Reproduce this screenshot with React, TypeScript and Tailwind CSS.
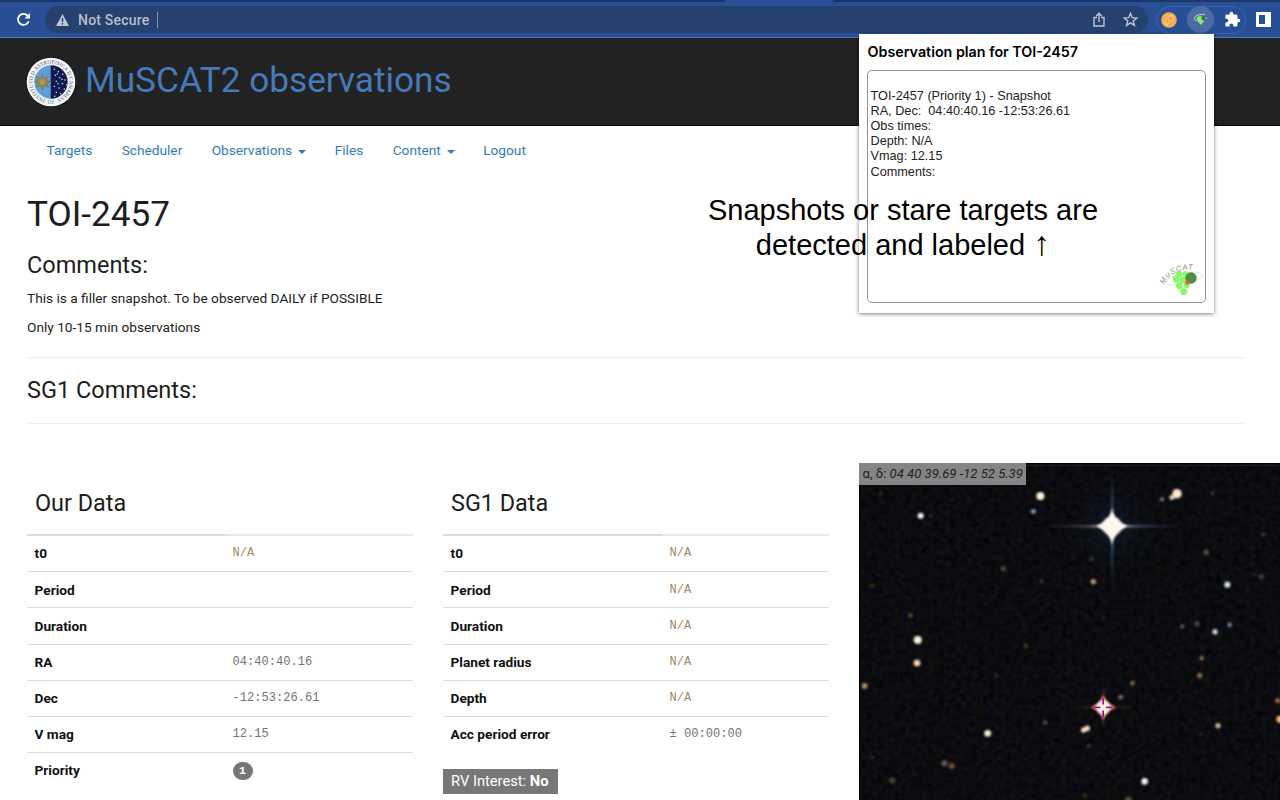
import React from "react";
import { MdExtension } from "react-icons/md";

type Row = { label: string; value?: string; kind?: "na" | "num" | "badge" };

const ourRows: Row[] = [
  { label: "t0", value: "N/A", kind: "na" },
  { label: "Period" },
  { label: "Duration" },
  { label: "RA", value: "04:40:40.16", kind: "num" },
  { label: "Dec", value: "-12:53:26.61", kind: "num" },
  { label: "V mag", value: "12.15", kind: "num" },
  { label: "Priority", value: "1", kind: "badge" },
];

const sgRows: Row[] = [
  { label: "t0", value: "N/A", kind: "na" },
  { label: "Period", value: "N/A", kind: "na" },
  { label: "Duration", value: "N/A", kind: "na" },
  { label: "Planet radius", value: "N/A", kind: "na" },
  { label: "Depth", value: "N/A", kind: "na" },
  { label: "Acc period error", value: "± 00:00:00", kind: "num" },
];

// x, y, radius, colour, opacity
const stars: [number, number, number, string, number][] = [
  [571, 124, 12, "#fff1dc", 1], [550, 170, 7, "#b8cbe0", 0.8], [212, 183, 9, "#f4f4f4", 1],
  [981, 117, 14, "#ffe9cc", 1], [966, 128, 8, "#f5ddc0", 0.9], [936, 134, 6, "#c0b0a0", 0.7],
  [1087, 115, 6, "#8a5530", 0.5], [1068, 292, 8, "#8c7050", 0.7], [1240, 239, 6, "#6a5a48", 0.6],
  [1132, 390, 9, "#e2ebf5", 1], [1234, 366, 8, "#554c40", 0.7], [1214, 358, 6, "#554030", 0.5],
  [1139, 510, 7, "#7d9cc0", 0.8], [1095, 531, 8, "#d8e0ea", 0.95], [1041, 507, 8, "#59616a", 0.7],
  [997, 515, 7, "#806a58", 0.7], [1055, 610, 7, "#a88660", 0.8], [1049, 662, 8, "#a88058", 0.8],
  [730, 381, 8, "#d0a880", 0.9], [574, 379, 6, "#5c5850", 0.6], [460, 342, 8, "#6d5b4c", 0.7],
  [182, 482, 7, "#86603c", 0.7], [203, 555, 12, "#fff3dc", 1], [201, 624, 10, "#f7dfba", 1],
  [44, 693, 9, "#b48c66", 0.95], [528, 573, 7, "#6a4830", 0.6], [439, 662, 6, "#4d4334", 0.7],
  [847, 685, 7, "#b08058", 0.8], [812, 727, 7, "#a08878", 0.8], [585, 803, 7, "#666660", 0.7],
  [413, 835, 10, "#fff3df", 1], [701, 825, 8, "#ffe7c8", 1], [712, 820, 8, "#ffe7c8", 1],
  [1104, 812, 8, "#d8b890", 0.95], [1284, 737, 8, "#a07048", 0.9], [1290, 793, 11, "#f0b878", 1],
  [716, 873, 6, "#755030", 0.6], [283, 925, 9, "#8f7f6b", 0.7], [305, 933, 9, "#8c6440", 0.8],
  [127, 977, 9, "#635746", 0.7], [884, 979, 10, "#ecf1ec", 1], [705, 1021, 7, "#5c3c20", 0.6],
  [835, 1036, 10, "#78684f", 0.8], [67, 908, 6, "#4e3a24", 0.6], [67, 393, 6, "#544028", 0.6],
  [92, 117, 6, "#4e301c", 0.7], [242, 183, 5, "#454545", 0.7], [1052, 837, 5, "#533018", 0.7],
  [761, 490, 5, "#40362c", 0.6], [725, 313, 8, "#30363c", 0.7],
];

function SkyMap() {
  return (
    <svg className="block h-[337px] w-[421px]" viewBox="27 25 1263 1010" preserveAspectRatio="none">
      <defs>
        <filter id="soft" x="-50%" y="-50%" width="200%" height="200%">
          <feGaussianBlur stdDeviation="3" />
        </filter>
        <filter id="streak" x="-50%" y="-50%" width="200%" height="200%">
          <feGaussianBlur stdDeviation="2.4" />
        </filter>
        <filter id="grain" x="0" y="0" width="100%" height="100%" colorInterpolationFilters="sRGB">
          <feTurbulence type="fractalNoise" baseFrequency="0.06" numOctaves="2" seed="7" />
          <feColorMatrix values="0.1 0.03 0 0 -0.022  0.05 0.06 0 0 -0.01  0 0.03 0.1 0 -0.007  0 0 0 0 1" />
        </filter>
        <radialGradient id="halo">
          <stop offset="0" stopColor="#1d3e68" stopOpacity="0.55" />
          <stop offset="0.4" stopColor="#102741" stopOpacity="0.22" />
          <stop offset="1" stopColor="#0b1724" stopOpacity="0" />
        </radialGradient>
        <linearGradient id="warm">
          <stop offset="0" stopColor="#6a3c1c" stopOpacity="0" />
          <stop offset="0.35" stopColor="#94501f" stopOpacity="0.4" />
          <stop offset="0.5" stopColor="#ffc38b" />
          <stop offset="0.65" stopColor="#94501f" stopOpacity="0.4" />
          <stop offset="1" stopColor="#6a3c1c" stopOpacity="0" />
        </linearGradient>
        <linearGradient id="warmV" x2="0" y2="1">
          <stop offset="0" stopColor="#6a3c1c" stopOpacity="0" />
          <stop offset="0.5" stopColor="#ffb070" />
          <stop offset="1" stopColor="#6a3c1c" stopOpacity="0" />
        </linearGradient>
        <linearGradient id="h">
          <stop offset="0" stopColor="#5c4030" stopOpacity="0" />
          <stop offset="0.3" stopColor="#8f7a70" stopOpacity="0.45" />
          <stop offset="0.5" stopColor="#fff" />
          <stop offset="0.7" stopColor="#62799a" stopOpacity="0.5" />
          <stop offset="1" stopColor="#3a5478" stopOpacity="0" />
        </linearGradient>
        <linearGradient id="v" x2="0" y2="1">
          <stop offset="0" stopColor="#34587a" stopOpacity="0" />
          <stop offset="0.32" stopColor="#4a7095" stopOpacity="0.5" />
          <stop offset="0.5" stopColor="#fff" />
          <stop offset="0.68" stopColor="#4a7095" stopOpacity="0.6" />
          <stop offset="1" stopColor="#34587a" stopOpacity="0" />
        </linearGradient>
      </defs>
      <rect x="27" y="25" width="1263" height="1010" filter="url(#grain)" />
      <circle cx="786" cy="215" r="135" fill="url(#halo)" />
      <g filter="url(#streak)">
        <rect x="576" y="211" width="420" height="7" fill="url(#h)" />
        <rect x="783" y="40" width="7" height="350" fill="url(#v)" />
        <rect x="655" y="754" width="210" height="6" fill="url(#warm)" />
        <rect x="757" y="690" width="6" height="134" fill="url(#warmV)" />
      </g>
      <g filter="url(#soft)">
        {stars.map(([x, y, r, c, o], i) => (
          <circle key={i} cx={x} cy={y} r={r} fill={c} opacity={o} />
        ))}
        <path d="M786 160 C792 190 806 205 835 214 C806 224 793 236 786 270 C779 236 766 224 737 214 C766 205 780 190 786 160Z" fill="#c5d6e4" />
        <path d="M786 172 C796 188 812 203 830 214 C812 226 798 240 786 258 C774 240 760 226 742 214 C760 203 776 188 786 172Z" fill="#fff8ef" />
        <circle cx="786" cy="214" r="29" fill="#fff8ef" />
        <path d="M760 722 Q772 745 796 757 Q772 769 760 794 Q748 769 724 757 Q748 745 760 722Z" fill="#e89a60" />
        <circle cx="760" cy="757" r="21" fill="#fff0df" />
      </g>
      <g fill="#a800b8">
        <rect x="757" y="729" width="5" height="20" />
        <rect x="757" y="767" width="5" height="20" />
        <rect x="731" y="755" width="20" height="5" />
        <rect x="768" y="755" width="20" height="5" />
      </g>
      <path d="M27 27H1290M28 25V1035" stroke="#000" strokeWidth="6" />
      <path d="M28 31.5H1290" stroke="#3b3b3b" strokeWidth="2" />
    </svg>
  );
}

function InstituteSeal() {
  return (
    <svg className="size-[50px] shrink-0" viewBox="0 0 150 150">
      <defs>
        <path id="ring" d="M75 130 A55 55 0 1 1 75.1 130" />
      </defs>
      <circle cx="75" cy="75" r="75" fill="#111" />
      <circle cx="75" cy="75" r="73" fill="#f5f6f7" />
      <text className="font-['Liberation_Serif',serif]" fontSize="16" fill="#4a5478">
        <textPath href="#ring" startOffset="18" textLength="308" lengthAdjust="spacingAndGlyphs">INSTITUTO D ASTROFISICA D CANARIAS</textPath>
      </text>
      <path d="M75 25 A50 50 0 0 0 75 125Z" fill="#5f9ed6" />
      <path d="M75 25 A50 50 0 0 1 75 125Z" fill="#111a50" />
      <path d="M49 50 54 65 66 57 61 70 75 74 61 79 68 92 54 85 49 99 44 85 31 92 37 79 25 74 37 70 31 57 44 65Z" fill="#94874e" stroke="#6d6d52" strokeWidth="1.5" />
      <circle cx="49" cy="75" r="9" fill="#b19a4c" />
      <g fill="#c7cfe5">
        {[[83, 35], [95, 42], [108, 50], [86, 53], [99, 60], [115, 67], [89, 71], [107, 78], [83, 86], [97, 91], [113, 94], [89, 104], [102, 108], [84, 116], [120, 82], [94, 78], [106, 65], [92, 49]].map(([x, y], i) => (
          <rect key={i} x={x} y={y} width="4" height="4" />
        ))}
      </g>
      <path d="M75 25V125" stroke="#222a4c" strokeWidth="2" />
      <text x="75" y="142" textAnchor="middle" fontSize="16" fill="#6ca5d8" className="font-['Liberation_Serif',serif]">DE</text>
    </svg>
  );
}

function GrapeLogo() {
  return (
    <svg className="h-[38px] w-[46px] overflow-visible" viewBox="0 -6 138 114">
      <defs>
        <path id="arch" d="M19 68 C29 38 62 20 114 22" />
      </defs>
      <ellipse cx="79" cy="50" rx="56" ry="16" transform="rotate(-12 79 50)" fill="none" stroke="#d5d5d5" strokeWidth="2" />
      <text className="font-['Liberation_Sans',sans-serif]" fontSize="23" fontStyle="italic" fill="#8b8b8b">
        <textPath href="#arch" textLength="104">MuSCAT</textPath>
      </text>
      <g fill="#84fa66">
        <circle cx="63" cy="36" r="10" />
        <circle cx="82" cy="36" r="9" />
        <circle cx="54" cy="52" r="10" />
        <circle cx="75" cy="54" r="10" />
        <circle cx="64" cy="71" r="10" />
        <circle cx="86" cy="70" r="9" />
        <circle cx="77" cy="89" r="10" />
      </g>
      <circle cx="99" cy="48" r="17" fill="#4d8b45" />
      <circle cx="88" cy="62" r="6.5" fill="#f85d3b" />
    </svg>
  );
}

function BrowserBar() {
  return (
    <div className="flex h-[38px] flex-col border-b border-[#4a79b4] bg-[#284f96]">
      <div className="flex h-[2px] bg-[#1b3766]">
        <div className="ml-[725px] h-[2px] w-[108px] bg-[#284f96]" />
      </div>
      <div className="flex h-[35px] items-center">
        <svg className="ml-4 size-[15px]" viewBox="0 0 15 15" fill="none" stroke="#fff" strokeWidth="1.8">
          <path d="M12.7 9.2A5.5 5.5 0 1 1 11.7 3.8" />
          <path d="M14 1V6.5H8.5Z" fill="#fff" stroke="none" />
        </svg>
        <div className="ml-[14px] flex h-[27px] w-[1103px] items-center rounded-full bg-[#24416f] pl-[11px]">
          <svg className="h-[12px] w-[13px]" viewBox="0 0 13 12">
            <path d="M6.5 0 13 12H0Z" fill="#c0c6d1" />
            <path d="M6.5 4V8M6.5 9V10.4" stroke="#24416f" strokeWidth="1.4" />
          </svg>
          <span className="ml-[9px] w-[73px] whitespace-nowrap font-['Roboto',sans-serif] text-[14px] font-medium leading-4 tracking-[0.015em] text-[#b8bfca]">
            Not Secure
          </span>
          <span className="ml-[6px] h-4 w-px bg-[#8290a9]" />
          <svg className="ml-auto h-[15px] w-[12px]" viewBox="0 0 12 15" fill="none" stroke="#c0c6d1" strokeWidth="1.4">
            <path d="M4 5.5H1V14H11V5.5H8M6 10V1.5M3.3 4 6 1.3 8.7 4" />
          </svg>
          <svg className="mr-[10px] ml-[18px] size-[15px]" viewBox="0 0 15 15" fill="none" stroke="#c0c6d1" strokeWidth="1.4">
            <path d="M7.5 1.5 9.2 5.7 13.8 6 10.2 9 11.4 13.4 7.5 10.9 3.6 13.4 4.8 9 1.2 6 5.8 5.7Z" />
          </svg>
        </div>
        <div className="ml-[8px] flex h-[28px] w-[90px] items-center rounded-full border border-[#3c61a4] pl-[4px]">
          <svg className="size-[16px] shrink-0" viewBox="0 0 16 16">
            <circle cx="8" cy="8" r="7.8" fill="#f2ae51" />
            <rect x="2.8" y="5.8" width="10.4" height="4.4" rx="2.2" transform="rotate(-45 8 8)" fill="#eda54c" stroke="#ffdca0" strokeWidth=".9" />
            <path d="M7 9 9 7" stroke="#ffe3b2" strokeWidth=".8" />
          </svg>
          <div className="ml-[10px] flex size-[27px] shrink-0 items-center justify-center rounded-full bg-[#4b6ba5]">
            <svg className="h-[13px] w-[15px]" viewBox="0 0 15 13">
              <path d="M1 6C2 3 6 1 12 1.5M1 7C4 8 11 7 14 4.5" fill="none" stroke="#adb8bd" strokeWidth="1.3" />
              <path d="M3.5 5 6 3 10 3.5 11 8 8 12 5 9Z" fill="#81ed76" />
              <circle cx="10.5" cy="5" r="2.2" fill="#397b3b" />
              <circle cx="9.3" cy="7" r=".8" fill="#d85d3b" />
            </svg>
          </div>
          <MdExtension className="ml-[10px] size-[17px] shrink-0 text-white" />
        </div>
        <svg className="ml-[10px] size-[15px]" viewBox="0 0 15 15">
          <path d="M0 0H15V15H0ZM3 3V12H9V3Z" fill="#fff" fillRule="evenodd" />
        </svg>
      </div>
    </div>
  );
}

function Caret() {
  return <span className="ml-[6px] inline-block border-x-4 border-t-4 border-x-transparent border-t-[#337ab7] align-[1px]" />;
}

function DataTable({ title, rows, split }: { title: string; rows: Row[]; split: string }) {
  return (
    <section className="w-[386px]">
      <h3 className="h-[71px] pl-2 pt-[25px] text-[23.4px] leading-[30px] text-[#1d1d1d]">{title}</h3>
      <div className="flex h-[2px]">
        <div className={`${split} bg-[#dadada]`} />
        <div className="flex-1 bg-[#e8e8e8]" />
      </div>
      <div className="-mt-px">
        {rows.map((row, i) => (
          <div key={row.label} className={`flex h-[36.2px] items-center text-[13.7px] ${i ? "border-t border-[#dedede]" : ""}`}>
            <div className={`${split} pl-[7.5px] font-bold text-[#111]`}>{row.label}</div>
            {row.kind === "badge" ? (
              <span className="ml-[7.5px] flex h-[18px] w-[20px] items-center justify-center rounded-full bg-[#777] font-['Liberation_Mono',monospace] text-[11.5px] font-bold text-white">
                {row.value}
              </span>
            ) : (
              <div className={`pl-[7.5px] font-['Liberation_Mono',monospace] text-[12.1px] ${row.kind === "na" ? "text-[#a08863]" : "text-[#747474]"}`}>
                {row.value}
              </div>
            )}
          </div>
        ))}
      </div>
    </section>
  );
}

export default function App() {
  return (
    <div className="relative h-[800px] w-[1280px] overflow-hidden bg-white font-['Roboto',sans-serif] text-[#1d1d1d]">
      <BrowserBar />
      <header className="flex h-[88px] items-center border-b border-[#080808] bg-[#222] pl-[26px]">
        <InstituteSeal />
        <h1 className="mb-[4px] ml-[9px] whitespace-nowrap text-[35.2px] leading-10 text-[#447ab9]">MuSCAT2 observations</h1>
      </header>
      <nav className="flex h-[49px] items-center pl-[46.5px] text-[13.7px] text-[#337ab7]">
        <a className="w-[75.2px]">Targets</a>
        <a className="w-[90px]">Scheduler</a>
        <a className="w-[123px]">Observations<Caret /></a>
        <a className="w-[58px]">Files</a>
        <a className="w-[90.5px]">Content<Caret /></a>
        <a>Logout</a>
      </nav>
      <main className="pl-[27px]">
        <h1 className="mt-[18px] text-[35.2px] leading-[42px]">TOI-2457</h1>
        <h3 className="mt-[15px] text-[23.5px] leading-[30px]">Comments:</h3>
        <p className="mt-[8px] text-[13.7px] leading-5">This is a filler snapshot. To be observed DAILY if POSSIBLE</p>
        <p className="mt-[9px] text-[13.7px] leading-5">Only 10-15 min observations</p>
        <hr className="mt-[20px] w-[1218px] border-[#eee]" />
        <h3 className="mt-[17px] text-[23.5px] leading-[30px]">SG1 Comments:</h3>
        <hr className="mt-[18px] w-[1218px] border-[#eee]" />
        <div className="mt-[39px] flex">
          <DataTable title="Our Data" rows={ourRows} split="w-[198px]" />
          <div className="ml-[30px]">
            <DataTable title="SG1 Data" rows={sgRows} split="w-[219px]" />
            <div className="mt-[17px] h-[25px] w-[115px] whitespace-nowrap bg-[#777] pl-[8px] text-[14.7px] leading-[24px] text-white">
              RV Interest: <b>No</b>
            </div>
          </div>
          <div className="relative ml-[30px] h-[337px] w-[421px] shrink-0">
            <SkyMap />
            <div className="absolute left-0 top-0 h-[22px] w-[167px] whitespace-nowrap bg-[#858585] pl-[3.5px] text-[13.1px] leading-[21px] text-[#222]">
              α, δ: <i>04 40 39.69 -12 52 5.39</i>
            </div>
          </div>
        </div>
      </main>

      <aside className="absolute left-[859px] top-[34px] h-[279px] w-[355px] bg-white px-2 pt-[9px] shadow-[0_1px_4px_rgba(0,0,0,0.5)]">
        <h2 className="whitespace-nowrap pl-[0.5px] font-['Inter',sans-serif] text-[14.3px] font-semibold leading-[18px] text-black">
          Observation plan for TOI-2457
        </h2>
        <div className="mt-[9px] flex h-[233px] w-[339px] flex-col justify-between rounded-[5px] border border-[#929292] pl-[2.5px] pt-[17.5px] font-['Liberation_Sans',sans-serif] text-[12.7px] leading-[15.2px] text-[#222]">
          <div className="whitespace-pre">
            <p>TOI-2457 (Priority 1) - Snapshot</p>
            <p>RA, Dec:  04:40:40.16 -12:53:26.61</p>
            <p>Obs times:</p>
            <p>Depth: N/A</p>
            <p>Vmag: 12.15</p>
            <p>Comments:</p>
          </div>
          <div className="mb-[4px] mr-[1px] self-end"><GrapeLogo /></div>
        </div>
      </aside>

      <div className="absolute left-[703px] top-[193px] w-[400px] whitespace-nowrap text-center font-['Liberation_Sans',sans-serif] text-[29px] leading-[35px] text-black">
        Snapshots or stare targets are
        <br />
        detected and labeled <span className="text-[34px] leading-[0]">↑</span>
      </div>
    </div>
  );
}
